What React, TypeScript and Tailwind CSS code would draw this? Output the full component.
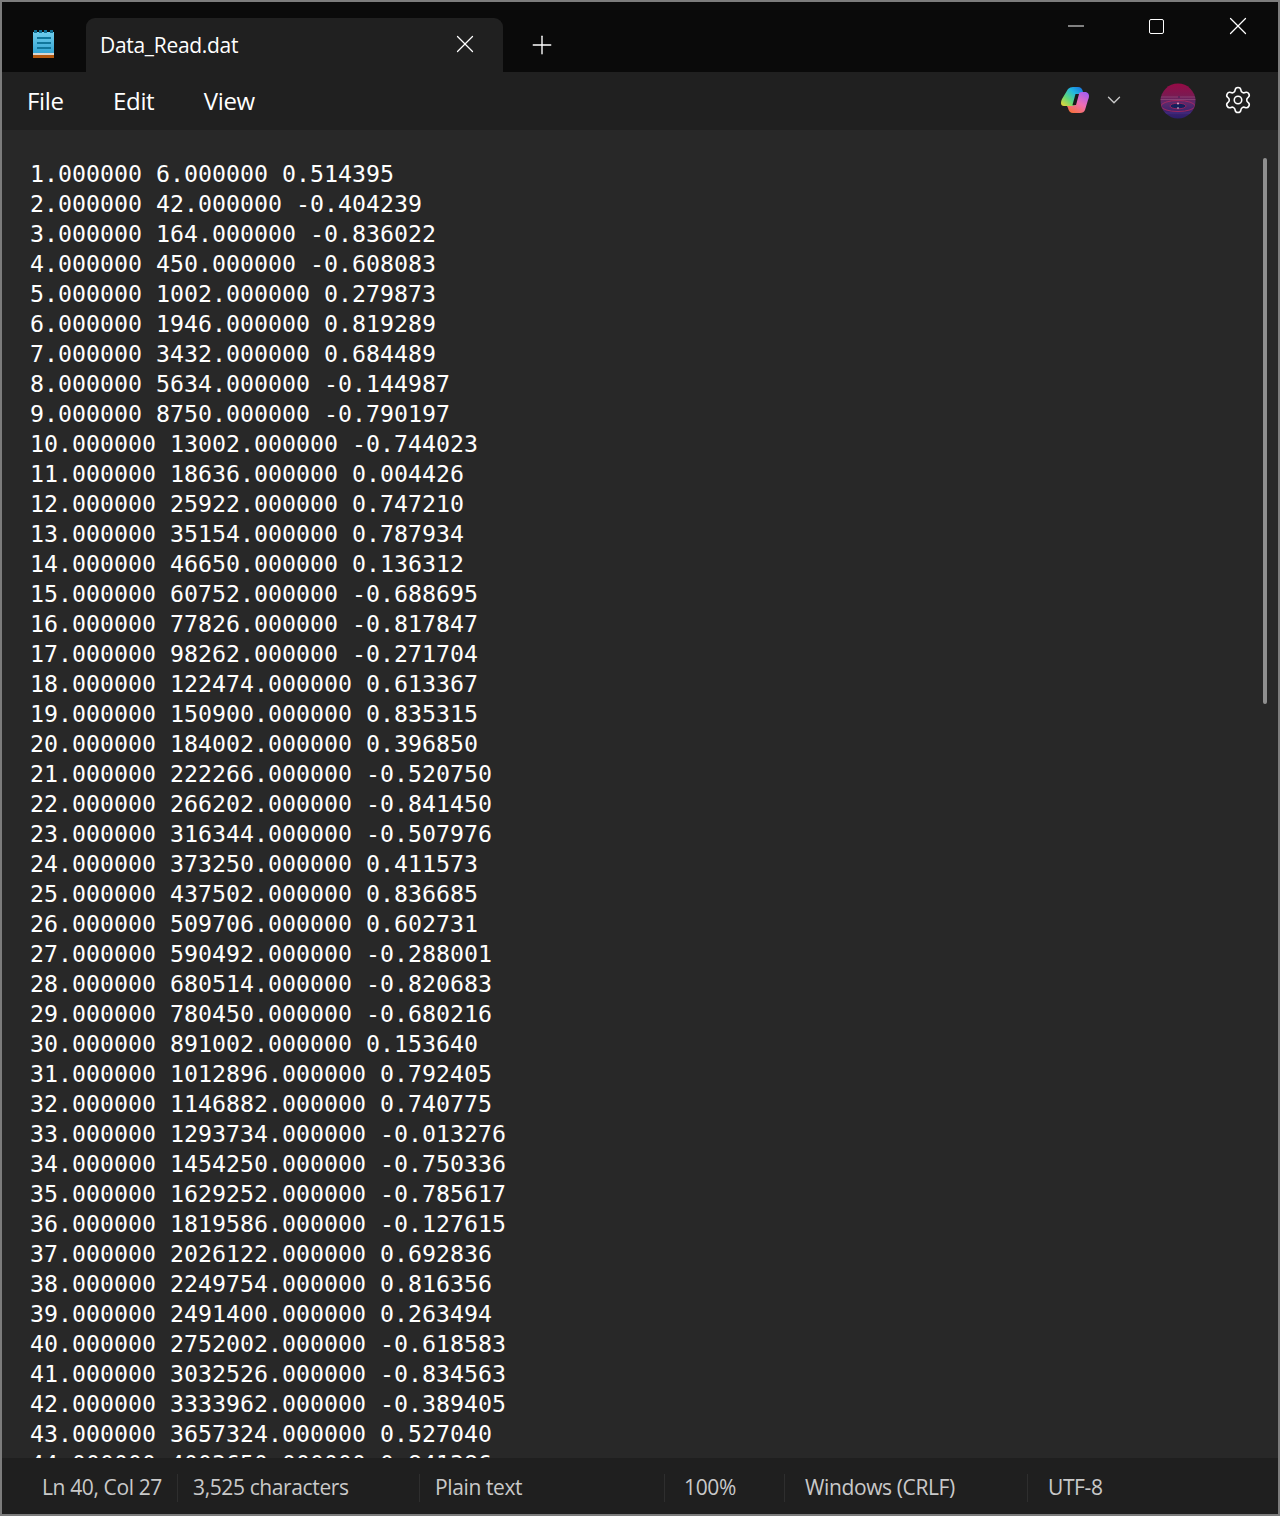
import { Minus, Plus, X, ChevronDown, Settings } from "lucide-react";

const lines = `1.000000 6.000000 0.514395
2.000000 42.000000 -0.404239
3.000000 164.000000 -0.836022
4.000000 450.000000 -0.608083
5.000000 1002.000000 0.279873
6.000000 1946.000000 0.819289
7.000000 3432.000000 0.684489
8.000000 5634.000000 -0.144987
9.000000 8750.000000 -0.790197
10.000000 13002.000000 -0.744023
11.000000 18636.000000 0.004426
12.000000 25922.000000 0.747210
13.000000 35154.000000 0.787934
14.000000 46650.000000 0.136312
15.000000 60752.000000 -0.688695
16.000000 77826.000000 -0.817847
17.000000 98262.000000 -0.271704
18.000000 122474.000000 0.613367
19.000000 150900.000000 0.835315
20.000000 184002.000000 0.396850
21.000000 222266.000000 -0.520750
22.000000 266202.000000 -0.841450
23.000000 316344.000000 -0.507976
24.000000 373250.000000 0.411573
25.000000 437502.000000 0.836685
26.000000 509706.000000 0.602731
27.000000 590492.000000 -0.288001
28.000000 680514.000000 -0.820683
29.000000 780450.000000 -0.680216
30.000000 891002.000000 0.153640
31.000000 1012896.000000 0.792405
32.000000 1146882.000000 0.740775
33.000000 1293734.000000 -0.013276
34.000000 1454250.000000 -0.750336
35.000000 1629252.000000 -0.785617
36.000000 1819586.000000 -0.127615
37.000000 2026122.000000 0.692836
38.000000 2249754.000000 0.816356
39.000000 2491400.000000 0.263494
40.000000 2752002.000000 -0.618583
41.000000 3032526.000000 -0.834563
42.000000 3333962.000000 -0.389405
43.000000 3657324.000000 0.527040
44.000000 4003650.000000 0.841386`.split("\n");

const ui = "font-['Open_Sans','Noto_Sans',sans-serif]";

function NotepadIcon() {
  return (
    <svg width="24" height="28" viewBox="0 0 24 28">
      <defs>
        <linearGradient id="pad" x1="0" y1="0" x2="0" y2="1">
          <stop offset="0" stopColor="#6fcdec" />
          <stop offset="1" stopColor="#35a5d3" />
        </linearGradient>
      </defs>
      <rect x="1" y="2" width="21" height="21" fill="url(#pad)" />
      <rect x="2" y="0" width="3" height="3" fill="#0f6f94" />
      <rect x="7" y="0" width="3" height="3" fill="#0f6f94" />
      <rect x="12" y="0" width="3" height="3" fill="#0f6f94" />
      <rect x="18" y="0" width="3" height="3" fill="#0f6f94" />
      <rect x="5" y="7" width="14" height="2" fill="#10769b" />
      <rect x="5" y="12" width="14" height="2" fill="#10769b" />
      <rect x="5" y="17" width="14" height="2" fill="#10769b" />
      <rect x="1" y="23" width="21" height="2" fill="#d9d6d0" />
      <rect x="1" y="25" width="21" height="3" fill="#b4580f" />
    </svg>
  );
}

function CopilotIcon() {
  return (
    <svg width="30" height="28" viewBox="0 0 30 28">
      <defs>
        <linearGradient id="cpA" x1="0" y1="1" x2="1" y2="0">
          <stop offset="0" stopColor="#f8d52e" />
          <stop offset="0.35" stopColor="#5fd67a" />
          <stop offset="0.65" stopColor="#22b8e0" />
          <stop offset="1" stopColor="#1668e0" />
        </linearGradient>
        <linearGradient id="cpB" x1="0.2" y1="1" x2="0.8" y2="0">
          <stop offset="0" stopColor="#f8703a" />
          <stop offset="0.5" stopColor="#f06eb4" />
          <stop offset="1" stopColor="#a55ff0" />
        </linearGradient>
      </defs>
      <path d="M8 3 Q10 1 13 1 H18 Q22 1 23 6 L19 8 L16 18 Q15 20 12 20 H4 Q1 20 1 17 Q1 15 2 13 Z" fill="url(#cpA)" />
      <path d="M22 6 H26 Q29 7 29 10 Q29 12 28 14 L25 24 Q24 27 20 27 H13 Q9 27 8 22 L7 20 H12 Q15 20 16 17 L18 9 Q19 6 22 6 Z" fill="url(#cpB)" />
      <path d="M15.5 8 H19 L16 19 H12.5 Z" fill="#1b1b1b" />
    </svg>
  );
}

function Avatar() {
  return (
    <svg width="36" height="36" viewBox="0 0 36 36">
      <defs>
        <linearGradient id="av" x1="0" y1="0" x2="0" y2="1">
          <stop offset="0" stopColor="#960a45" />
          <stop offset="0.35" stopColor="#7a1a52" />
          <stop offset="0.55" stopColor="#5b2a6c" />
          <stop offset="1" stopColor="#2a1d6c" />
        </linearGradient>
        <clipPath id="avClip">
          <circle cx="18" cy="18" r="17.5" />
        </clipPath>
      </defs>
      <circle cx="18" cy="18" r="17.5" fill="url(#av)" />
      <g clipPath="url(#avClip)" fill="none" strokeWidth="0.8">
        <path d="M0 14 H36 M0 16.5 H36" stroke="#8d4a7a" />
        <ellipse cx="18" cy="23" rx="17" ry="5.5" stroke="#b52a5e" />
        <ellipse cx="18" cy="23" rx="8" ry="2.8" fill="#15205c" stroke="#a8265f" />
        <path d="M2 30 H34" stroke="#44348e" />
      </g>
      <circle cx="18" cy="20.5" r="1" fill="#e3a3c0" />
      <circle cx="18" cy="25" r="0.8" fill="#e3d3e0" />
      <circle cx="19" cy="14" r="0.7" fill="#20204f" />
    </svg>
  );
}

function Divider() {
  return <div className="h-[28px] w-px bg-[#2e2e2e]" />;
}

export default function App() {
  return (
    <div className={`flex h-[1516px] w-[1280px] flex-col overflow-hidden border-2 border-[#7c7c7c] bg-[#282828] text-white ${ui}`}>
      <div className="flex h-[70px] shrink-0 bg-[#0a0a0a]">
        <div className="flex w-[84px] justify-center pt-[28px] pr-[1px]">
          <NotepadIcon />
        </div>
        <div className="mt-[16px] flex h-[54px] w-[417px] items-start rounded-t-[9px] bg-[#202020] pl-[14px] pr-[23px] pt-[12px]">
          <span className="flex-1 text-[21px] leading-[30px] tracking-[-0.3px]">Data_Read.dat</span>
          <X className="mt-[-1px]" size={30} strokeWidth={1} />
        </div>
        <div className="ml-[24px] mt-[28px]">
          <Plus size={30} strokeWidth={1.1} />
        </div>
        <div className="ml-auto flex items-start pt-[4px]">
          <div className="flex h-[40px] w-[80px] items-center justify-center">
            <Minus size={26} strokeWidth={0.9} />
          </div>
          <div className="flex h-[40px] w-[81px] items-center justify-center">
            <div className="h-[15px] w-[15px] rounded-[2px] border-[1.5px] border-white" />
          </div>
          <div className="flex h-[40px] w-[81px] items-center justify-center">
            <X size={30} strokeWidth={1} />
          </div>
        </div>
      </div>

      <div className="flex h-[58px] shrink-0 items-center bg-[#202020]">
        <div className="ml-[25px] flex gap-[49.5px] pb-[1px] text-[24px] tracking-[-0.35px]">
          <span>File</span>
          <span>Edit</span>
          <span>View</span>
        </div>
        <div className="ml-auto flex items-center">
          <div className="mb-[3px]">
            <CopilotIcon />
          </div>
          <ChevronDown className="mb-[3px] ml-[13px] text-[#c8c8c8]" size={22} strokeWidth={1.5} />
          <div className="ml-[35px]">
            <Avatar />
          </div>
          <Settings className="mb-[2px] ml-[27px] mr-[25px]" size={30} strokeWidth={1.25} />
        </div>
      </div>

      <div className="relative min-h-0 flex-1 overflow-hidden pl-[28px] pt-[29px]">
        <pre className="font-['DejaVu_Sans_Mono',monospace] text-[23.25px] leading-[30px] text-white">
          {lines.join("\n")}
        </pre>
        <div className="absolute right-[11px] top-[28px] h-[546px] w-[4px] rounded-full bg-[#8f8f8f]" />
      </div>

      <div className="flex h-[56px] shrink-0 items-center bg-[#1f1f1f] pt-[3px] text-[21px] tracking-[-0.38px] text-[#c9c9c9]">
        <span className="w-[175px] pl-[40px]">Ln 40, Col 27</span>
        <Divider />
        <span className="w-[241px] pl-[15px]">3,525 characters</span>
        <Divider />
        <span className="w-[244px] pl-[15px]">Plain text</span>
        <Divider />
        <span className="w-[119px] pl-[19px]">100%</span>
        <Divider />
        <span className="w-[242px] pl-[20px]">Windows (CRLF)</span>
        <Divider />
        <span className="pl-[20px]">UTF-8</span>
      </div>
    </div>
  );
}
